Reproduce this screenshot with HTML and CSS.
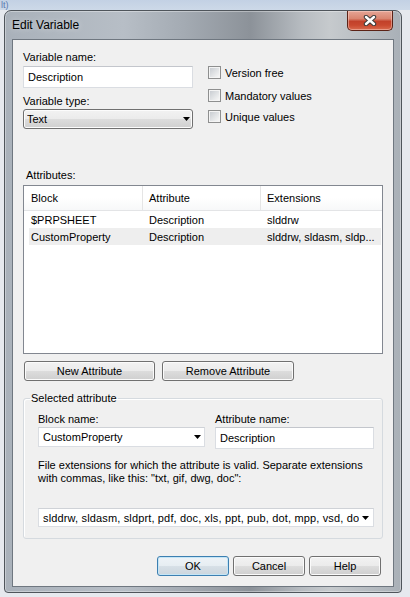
FILE: index.html
```html
<!DOCTYPE html>
<html>
<head>
<meta charset="utf-8">
<title>Edit Variable</title>
<link rel="stylesheet" href="styles.css">
</head>
<body>
<div class="desk-strip"><span class="desk-text">lt)</span></div>
<div class="window">
  <div class="titlebar">
    <span class="title">Edit Variable</span>
    <div class="close">
      <svg width="14" height="11" viewBox="0 0 14 11">
        <path d="M3 2 L11 9 M11 2 L3 9" stroke="#3b3b3b" stroke-width="4.4" stroke-linecap="round"/>
        <path d="M3 2 L11 9 M11 2 L3 9" stroke="#ffffff" stroke-width="2.4" stroke-linecap="round"/>
      </svg>
    </div>
  </div>
  <div class="client">
    <div class="top">
      <div class="left">
        <div class="label">Variable name:</div>
        <div class="textbox tb-top">Description</div>
        <div class="label lbl-type">Variable type:</div>
        <div class="dropdown">
          <span class="dd-text">Text</span>
          <svg class="arrow" width="7" height="4" viewBox="0 0 7 4"><polygon points="0,0 7,0 3.5,4" fill="#000"/></svg>
        </div>
      </div>
      <div class="checks">
        <div class="check c-first"><span class="box"><span class="box-in"></span></span><span>Version free</span></div>
        <div class="check c-second"><span class="box"><span class="box-in"></span></span><span>Mandatory values</span></div>
        <div class="check c-third"><span class="box"><span class="box-in"></span></span><span>Unique values</span></div>
      </div>
    </div>

    <div class="label attrs-label">Attributes:</div>
    <div class="listview">
      <div class="lv-header">
        <div class="hcell col1">Block</div>
        <div class="hcell col2">Attribute</div>
        <div class="hcell col3">Extensions</div>
      </div>
      <div class="lv-row">
        <div class="cell col1">$PRPSHEET</div>
        <div class="cell col2">Description</div>
        <div class="cell col3">slddrw</div>
      </div>
      <div class="lv-row selected">
        <div class="cell col1">CustomProperty</div>
        <div class="cell col2">Description</div>
        <div class="cell col3">slddrw, sldasm, sldp...</div>
      </div>
    </div>

    <div class="btnrow">
      <div class="btn btn-new">New Attribute</div>
      <div class="btn btn-remove">Remove Attribute</div>
    </div>

    <fieldset class="group">
      <legend>Selected attribute</legend>
      <div class="group-inner">
        <div class="group-row">
          <div class="field">
            <div class="label">Block name:</div>
            <div class="combo combo-block">
              <span class="combo-text">CustomProperty</span>
              <svg class="arrow" width="7" height="4" viewBox="0 0 7 4"><polygon points="0,0 7,0 3.5,4" fill="#000"/></svg>
            </div>
          </div>
          <div class="field">
            <div class="label">Attribute name:</div>
            <div class="textbox">Description</div>
          </div>
        </div>
        <p class="hint">File extensions for which the attribute is valid. Separate extensions<br>with commas, like this: "txt, gif, dwg, doc":</p>
        <div class="combo combo-ext">
          <span class="combo-text">slddrw, sldasm, sldprt, pdf, doc, xls, ppt, pub, dot, mpp, vsd, doc</span>
          <svg class="arrow" width="7" height="4" viewBox="0 0 7 4"><polygon points="0,0 7,0 3.5,4" fill="#000"/></svg>
        </div>
      </div>
    </fieldset>

    <div class="dlg-buttons">
      <div class="btn btn-dlg btn-default">OK</div>
      <div class="btn btn-dlg">Cancel</div>
      <div class="btn btn-dlg">Help</div>
    </div>
  </div>
</div>
</body>
</html>
```
FILE: styles.css
```css
html, body {
  margin: 0;
  padding: 0;
}
body {
  width: 410px;
  height: 597px;
  overflow: hidden;
  background: #e6e9ee;
  font-family: "Liberation Sans", Arial, sans-serif;
  font-size: 11px;
  color: #000;
}
.desk-strip {
  height: 10px;
  background: linear-gradient(#c3d1e4, #cdd9e8);
  overflow: hidden;
}
.desk-text {
  display: block;
  font-size: 9px;
  line-height: 10px;
  padding-left: 1px;
  color: #5a78b0;
}
.window {
  box-sizing: border-box;
  width: 398px;
  height: 583px;
  margin-left: 4px;
  border: 1px solid #4f555b;
  border-radius: 7px 7px 4px 4px;
  padding: 0 7px 5px 7px;
  display: flex;
  flex-direction: column;
  background:
    linear-gradient(90deg, #a9b1ba 0%, #b7bec6 30%, #a4abb3 45%, #8c9299 62%, #b7bcc1 75%, #c6cacd 82%, #a9b0b7 100%);
  box-shadow: inset 0 0 0 1px rgba(255,255,255,0.35);
}
.titlebar {
  height: 28px;
  display: flex;
  align-items: center;
}
.title {
  font-size: 12px;
  color: #000;
  text-shadow: 0 0 6px rgba(255,255,255,0.6);
  flex: 1;
}
.close {
  box-sizing: border-box;
  width: 46px;
  height: 20px;
  margin-top: -9px;
  margin-right: 1px;
  border: 1px solid #5b2216;
  border-top: none;
  border-radius: 0 0 5px 5px;
  background: linear-gradient(#e5a596 0%, #d98570 40%, #c2412a 55%, #c9492f 75%, #d96b4f 100%);
  box-shadow: inset 0 0 0 1px rgba(255,220,210,0.45);
  display: flex;
  align-items: center;
  justify-content: center;
}
.close svg {
  display: block;
}
.client {
  box-sizing: border-box;
  height: 548px;
  background: #f0f0f0;
  border: 1px solid #6f7780;
  padding: 11px 10px 0 10px;
  display: flex;
  flex-direction: column;
}
.label {
  line-height: 13px;
  white-space: nowrap;
}
.top {
  display: flex;
}
.left {
  width: 170px;
  display: flex;
  flex-direction: column;
}
.textbox {
  box-sizing: border-box;
  height: 22px;
  margin-top: 1px;
  background: #fff;
  border: 1px solid #dadde2;
  border-top-color: #c3c6cc;
  padding-left: 4px;
  display: flex;
  align-items: center;
  white-space: nowrap;
}
.tb-top {
  margin-top: 2px;
}
.lbl-type {
  margin-top: 7px;
}
.dropdown {
  box-sizing: border-box;
  height: 20px;
  margin-top: 1px;
  border: 1px solid #707070;
  border-radius: 3px;
  background: linear-gradient(#f2f2f2 0%, #ebebeb 50%, #dddddd 50%, #cfcfcf 100%);
  box-shadow: inset 0 0 0 1px #fcfcfc;
  padding: 0 2px 0 3px;
  display: flex;
  align-items: center;
}
.dd-text, .combo-text {
  flex: 1;
  white-space: nowrap;
  overflow: hidden;
}
.arrow {
  display: block;
  flex: none;
}
.checks {
  margin-left: 15px;
  display: flex;
  flex-direction: column;
}
.check {
  height: 13px;
  display: flex;
  align-items: center;
  gap: 4px;
  white-space: nowrap;
}
.c-first { margin-top: 15px; }
.c-second { margin-top: 10px; }
.c-third { margin-top: 8px; }
.box {
  box-sizing: border-box;
  width: 13px;
  height: 13px;
  border: 1px solid #8e8f8f;
  background: #f4f4f4;
  padding: 1px;
  display: block;
}
.box-in {
  display: block;
  width: 9px;
  height: 9px;
  background: linear-gradient(135deg, #c9cdd2 0%, #e2e4e6 55%, #f6f6f6 100%);
}
.attrs-label {
  margin-top: 40px;
  margin-left: 3px;
}
.listview {
  box-sizing: border-box;
  width: 360px;
  height: 169px;
  margin-top: 3px;
  border: 1px solid #828790;
  background: #fff;
}
.lv-header {
  display: flex;
  height: 24px;
  border-bottom: 1px solid #e3e4e6;
  background: linear-gradient(#ffffff 0%, #ffffff 50%, #f7f8f9 100%);
}
.hcell {
  box-sizing: border-box;
  line-height: 24px;
  padding-left: 6px;
  border-right: 1px solid #e5e5e5;
  white-space: nowrap;
}
.hcell.col1 { width: 119px; padding-left: 7px; }
.hcell.col2 { width: 118px; }
.hcell.col3 { width: 121px; border-right: none; }
.lv-row {
  display: flex;
  height: 17px;
  margin: 0 1px 0 5px;
}
.lv-row.selected {
  background: #eeeeee;
}
.cell {
  box-sizing: border-box;
  line-height: 17px;
  padding-top: 1px;
  padding-left: 6px;
  white-space: nowrap;
  overflow: hidden;
}
.cell.col1 { width: 114px; padding-left: 2px; }
.cell.col2 { width: 118px; }
.cell.col3 { flex: 1; }
.btnrow {
  display: flex;
  gap: 7px;
  margin-top: 7px;
  margin-left: 1px;
}
.btn {
  box-sizing: border-box;
  height: 20px;
  border: 1px solid #707070;
  border-radius: 3px;
  background: linear-gradient(#f2f2f2 0%, #ebebeb 50%, #dddddd 50%, #cfcfcf 100%);
  box-shadow: inset 0 0 0 1px #fbfbfb;
  display: flex;
  align-items: center;
  justify-content: center;
  white-space: nowrap;
}
.btn-new { width: 131px; }
.btn-remove { width: 132px; }
.group {
  box-sizing: border-box;
  width: 360px;
  margin: 10px 0 0 0;
  padding: 0 8px 11px 6px;
  border: 1px solid #d5dadf;
  border-radius: 3px;
  box-shadow: inset 1px 1px 0 #ffffff;
  min-width: 0;
}
.group legend {
  padding: 0 1px;
  line-height: 14px;
}
.group-inner {
  padding-left: 8px;
  display: flex;
  flex-direction: column;
}
.group-row {
  display: grid;
  grid-template-columns: 167px 159px;
  column-gap: 10px;
  margin-top: 8px;
  align-items: start;
}
.field {
  display: flex;
  flex-direction: column;
}
.combo {
  box-sizing: border-box;
  height: 20px;
  margin-top: 1px;
  background: #fff;
  border: 1px solid #dadde2;
  border-top-color: #cfd2d7;
  padding: 0 3px 0 4px;
  display: flex;
  align-items: center;
  gap: 3px;
}
.hint {
  margin: 10px 0 0 0;
  line-height: 13px;
  white-space: nowrap;
}
.combo-ext {
  width: 336px;
  height: 19px;
  margin-top: 23px;
  padding-right: 4px;
}
.combo-ext .combo-text {
  letter-spacing: 0.15px;
}
.dlg-buttons {
  display: flex;
  justify-content: flex-end;
  gap: 4px;
  margin-top: 17px;
  margin-right: 2px;
}
.btn-dlg {
  width: 72px;
}
.btn-default {
  border-color: #3c7fb1;
  background: linear-gradient(#eef3f7 0%, #e6edf2 50%, #d7e0e7 50%, #cbd5dd 100%);
  box-shadow: inset 0 0 0 1px #c4e5f6;
}
```
